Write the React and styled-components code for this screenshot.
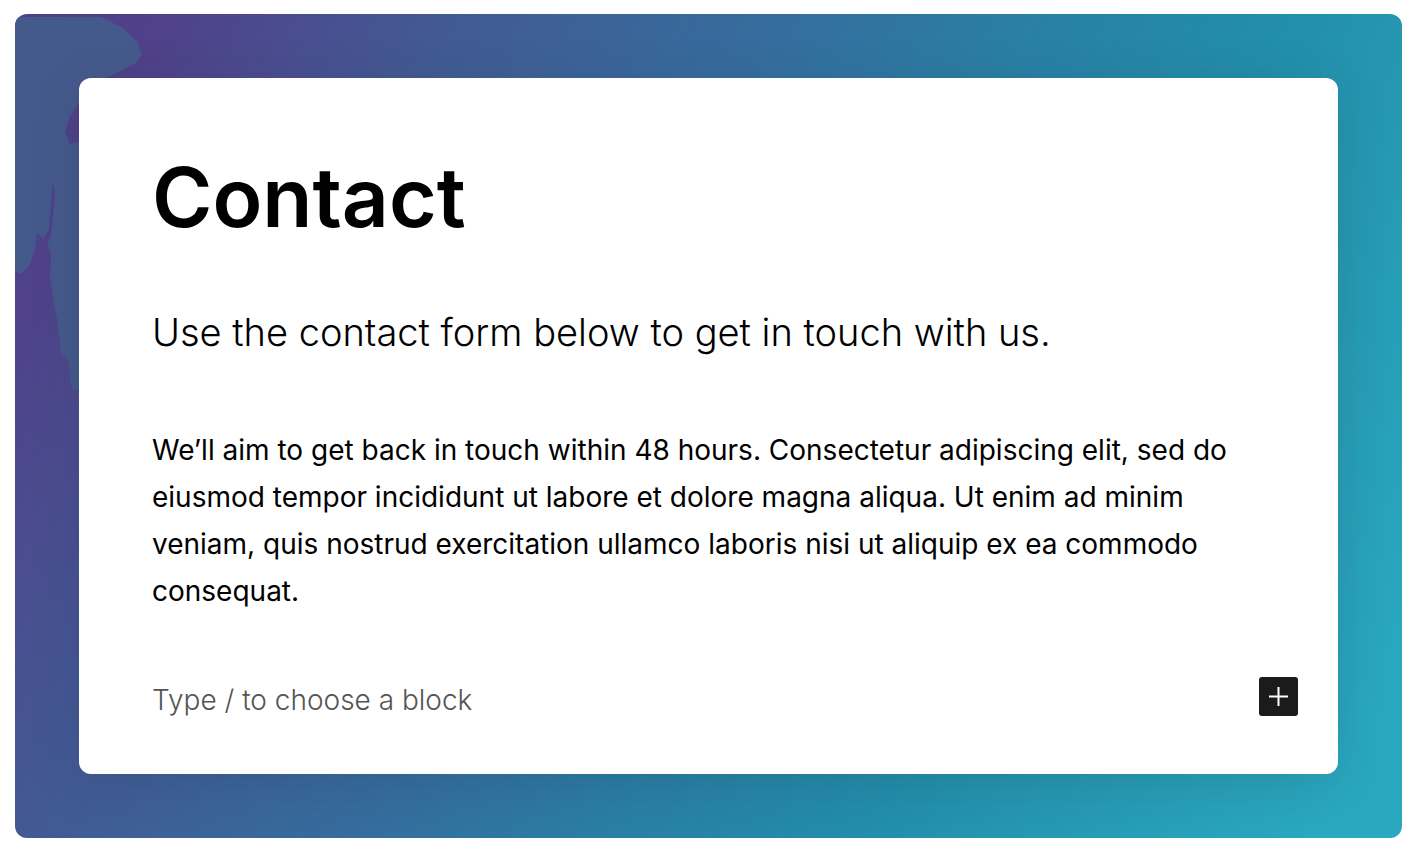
import { useState } from 'react'
import styled, { createGlobalStyle } from 'styled-components'

const GlobalStyle = createGlobalStyle`
  * {
    box-sizing: border-box;
  }
  body {
    margin: 0;
    background: #fff;
    color: #000;
    font-family: Inter, 'Liberation Sans', sans-serif;
  }
`

const Page = styled.div`
  padding: 14px 16px 20px 15px;
`

const Backdrop = styled.main`
  position: relative;
  padding: 64px;
  border-radius: 12px;
  background: linear-gradient(
    117deg,
    #503f88 0%,
    #4f428a 9%,
    #494f90 17%,
    #425a94 24%,
    #356e9e 43%,
    #2980a5 57%,
    #228fac 71%,
    #2596b0 77%,
    #29a8bf 95%
  );
  overflow: hidden;
`

const Stain = styled.svg`
  position: absolute;
  top: 0;
  left: 0;
  width: 130px;
  height: 380px;
`

const Card = styled.article`
  position: relative;
  padding: 68px 40px 50px 73px;
  border-radius: 12px;
  background: #fff;
  box-shadow: 0 10px 50px rgba(40, 40, 60, 0.16);
`

const Title = styled.h1`
  margin: 0;
  font-size: 82px;
  line-height: 104px;
  font-weight: 600;
`

const Lead = styled.p`
  margin: 54px 0 0;
  font-size: 38px;
  line-height: 56px;
  font-weight: 300;
`

const Body = styled.p`
  margin: 67px 33px 0 0;
  font-size: 28px;
  line-height: 47px;
`

const BlockRow = styled.div`
  display: flex;
  align-items: flex-start;
  gap: 24px;
  margin-top: 62px;
`

const BlockInput = styled.input`
  flex: 1;
  min-width: 0;
  height: 47px;
  padding: 0;
  border: 0;
  outline: 0;
  background: none;
  color: #000;
  font: inherit;
  font-size: 28px;
  line-height: 47px;

  &::placeholder {
    color: #555;
    font-weight: 300;
    opacity: 1;
  }
`

const AddButton = styled.button`
  display: grid;
  place-items: center;
  width: 39px;
  height: 39px;
  padding: 0;
  border: 0;
  border-radius: 3px;
  background: #1b1b1b;
  color: #fff;
  cursor: pointer;
`

const App = () => {
  const [block, setBlock] = useState('')

  return (
    <>
      <GlobalStyle />
      <Page>
        <Backdrop>
          <Stain viewBox="0 0 130 380" aria-hidden="true">
            <path
              fill="#455a8c"
              d="M0 3 H86 L108 14 L122 28 L127 40 L121 49 L98 61 L72 72 L64 88 L55 103 L50 118 L55 130 L64 128 V374 L58 378 L55 364 L54 348 L46 338 L42 305 L38 282 L35 262 L36 240 L32 232 L36 220 L40 180 L38 166 L34 215 L28 225 L22 218 L20 235 L15 250 L6 260 L0 256 Z"
            />
          </Stain>
          <Card>
            <Title>Contact</Title>
            <Lead>Use the contact form below to get in touch with us.</Lead>
            <Body>
              We’ll aim to get back in touch within 48 hours. Consectetur adipiscing elit, sed do
              eiusmod tempor incididunt ut labore et dolore magna aliqua. Ut enim ad minim
              veniam, quis nostrud exercitation ullamco laboris nisi ut aliquip ex ea commodo
              consequat.
            </Body>
            <BlockRow>
              <BlockInput
                aria-label="Block"
                placeholder="Type / to choose a block"
                value={block}
                onChange={(e) => setBlock(e.target.value)}
              />
              <AddButton type="button" aria-label="Add block">
                <svg width="19" height="19" viewBox="0 0 19 19" fill="none" stroke="currentColor" strokeWidth="2">
                  <path d="M9.5 0V19M0 9.5H19" />
                </svg>
              </AddButton>
            </BlockRow>
          </Card>
        </Backdrop>
      </Page>
    </>
  )
}

export default App
